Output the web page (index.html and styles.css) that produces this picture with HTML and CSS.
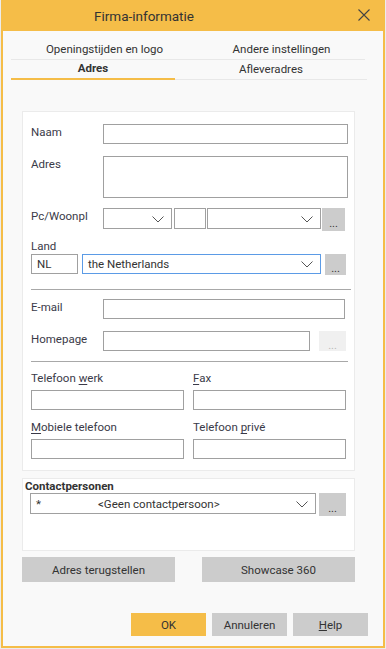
FILE: index.html
```html
<!DOCTYPE html>
<html lang="nl">
<head>
  <meta charset="UTF-8">
  <meta name="viewport" content="width=device-width, initial-scale=1.0">
  <title>Firma-informatie</title>
  <link rel="stylesheet" href="styles.css">
</head>
<body>

  <div class="dialog">
    <div class="titlebar">
      <span class="title">Firma-informatie</span>
      <svg class="close" width="12" height="12" viewBox="0 0 12 12">
        <path d="M0.5 0.5 L11.5 11.5 M11.5 0.5 L0.5 11.5" stroke="#444" stroke-width="1.1" fill="none"/>
      </svg>
    </div>

    <div class="tabs">
      <div class="tab-row top">
        <div class="tab wide">Openingstijden en logo</div>
        <div class="tab">Andere instellingen</div>
      </div>
      <div class="tab-row bottom">
        <div class="tab narrow active">Adres</div>
        <div class="tab">Afleveradres</div>
      </div>
    </div>

    <div class="panel address">
      <div class="row">
        <div class="label">Naam</div>
        <input class="field w-full" type="text">
      </div>

      <div class="row gap-12">
        <div class="label">Adres</div>
        <textarea class="field w-full area"></textarea>
      </div>

      <div class="row gap-10">
        <div class="label">Pc/Woonpl</div>
        <div class="select w-pc"><svg class="chev" width="12" height="7" viewBox="0 0 12 7"><path d="M0.5 0.5 L6 6 L11.5 0.5" stroke="#555" fill="none"/></svg></div>
        <input class="field w-nr" type="text">
        <div class="select w-city"><svg class="chev" width="12" height="7" viewBox="0 0 12 7"><path d="M0.5 0.5 L6 6 L11.5 0.5" stroke="#555" fill="none"/></svg></div>
        <button class="dots pc-dots">...</button>
      </div>

      <div class="label top-label">Land</div>
      <div class="row land">
        <input class="field w-code" type="text" value="NL">
        <div class="select w-country focused">
          <span>the Netherlands</span>
          <svg class="chev" width="12" height="7" viewBox="0 0 12 7"><path d="M0.5 0.5 L6 6 L11.5 0.5" stroke="#555" fill="none"/></svg>
        </div>
        <button class="dots land-dots">...</button>
      </div>

      <div class="separator sep-1"></div>

      <div class="row gap-9">
        <div class="label">E-mail</div>
        <input class="field w-mail" type="text">
      </div>

      <div class="row gap-12">
        <div class="label">Homepage</div>
        <input class="field w-home" type="text">
        <button class="dots disabled">...</button>
      </div>

      <div class="separator sep-2"></div>

      <div class="phones">
        <div class="phone">
          <div class="label">Telefoon <u>w</u>erk</div>
          <input class="field" type="text">
        </div>
        <div class="phone">
          <div class="label"><u>F</u>ax</div>
          <input class="field" type="text">
        </div>
        <div class="phone">
          <div class="label"><u>M</u>obiele telefoon</div>
          <input class="field" type="text">
        </div>
        <div class="phone">
          <div class="label">Telefoon <u>p</u>rivé</div>
          <input class="field" type="text">
        </div>
      </div>
    </div>

    <div class="panel contacts">
      <div class="contacts-title">Contactpersonen</div>
      <div class="row">
        <div class="select w-contact">
          <span class="star">*</span>
          <span class="contact-name">&lt;Geen contactpersoon&gt;</span>
          <svg class="chev" width="12" height="7" viewBox="0 0 12 7"><path d="M0.5 0.5 L6 6 L11.5 0.5" stroke="#555" fill="none"/></svg>
        </div>
        <button class="dots contact-dots">...</button>
      </div>
    </div>

    <div class="actions">
      <button class="gray-button">Adres terugstellen</button>
      <button class="gray-button">Showcase 360</button>
    </div>

    <div class="footer">
      <button class="footer-button ok">OK</button>
      <button class="footer-button">Annuleren</button>
      <button class="footer-button"><u>H</u>elp</button>
    </div>
  </div>

</body>
</html>
```

FILE: styles.css
```css
body {
  margin: 0;
  padding: 0;
  background: #ececec;
  font-family: Roboto, 'Noto Sans', sans-serif;
  font-size: 11.5px;
  color: #333;
}

.dialog {
  box-sizing: border-box;
  width: 384px;
  height: 648px;
  margin-left: 1px;
  background: #f9f9f9;
  border: 2px solid #f5bd48;
  border-top: none;
}

/* Title bar */
.titlebar {
  height: 31px;
  margin: 0 -2px;
  background: #f5bd48;
  display: flex;
  align-items: center;
  position: relative;
}

.title {
  padding-left: 93px;
  font-size: 13.5px;
  color: #333;
}

.close {
  position: absolute;
  left: 357px;
  top: 9px;
}

/* Tabs */
.tabs {
  margin-left: 8px;
}

.tab-row {
  display: flex;
  text-align: center;
}

.tab-row.top {
  margin-top: 9px;
  width: 354px;
  height: 19px;
  border-bottom: 1px solid #e8e8e8;
}

.tab-row.bottom {
  width: 356px;
  height: 19px;
  border-bottom: 1px solid #e8e8e8;
}

.tab {
  flex: 1;
  line-height: 18px;
}

.tab.wide {
  flex: 0 0 187px;
}

.tab.narrow {
  flex: 0 0 164px;
}

.tab.active {
  font-weight: bold;
  border-bottom: 2px solid #f5bd48;
  margin-bottom: -1px;
  line-height: 17px;
}

/* Panels */
.panel {
  box-sizing: border-box;
  width: 333px;
  margin-left: 19px;
  background: #fff;
  border: 1px solid #ebebeb;
}

.panel.address {
  margin-top: 31px;
  height: 360px;
  padding: 12px 0 0 8px;
}

.row {
  display: flex;
  align-items: flex-start;
}

.gap-9 { margin-top: 9px; }
.gap-10 { margin-top: 10px; }
.gap-12 { margin-top: 12px; }

.label {
  width: 72px;
  line-height: 16px;
  color: #3a3a48;
}

.label u {
  text-decoration-thickness: 1px;
  text-underline-offset: 2px;
}

.field {
  box-sizing: border-box;
  height: 20px;
  border: 1px solid #a0a0a0;
  background: #fff;
  margin: 0;
  padding: 0 5px;
  font: inherit;
  color: #333;
  outline: none;
}

textarea.field {
  resize: none;
}

.area { height: 42px; }

.w-full { width: 245px; }
.w-nr { width: 32px; height: 21px; margin: 0 1px 0 2px; }
.w-code { width: 47px; margin-right: 4px; }
.w-mail { width: 242px; }
.w-home { width: 207px; margin-right: 9px; }

.select {
  box-sizing: border-box;
  height: 21px;
  border: 1px solid #a0a0a0;
  background: #fff;
  display: flex;
  align-items: center;
  position: relative;
  padding-left: 5px;
}

.select .chev {
  position: absolute;
  right: 7px;
  top: 7px;
}

.w-pc { width: 69px; }
.w-city { width: 114px; margin-right: 1px; }

.w-country {
  width: 239px;
  height: 20px;
  margin-right: 4px;
  border-color: #5b9be6;
}

.w-country .chev { top: 6px; }

.dots {
  box-sizing: border-box;
  border: none;
  background: #cccccc;
  color: #333;
  font: inherit;
  font-size: 11px;
  line-height: 1;
  padding: 8px 0 0;
  margin: 0;
  height: 23px;
}

.pc-dots { width: 23px; }
.land-dots { width: 21px; height: 21px; }
.contact-dots { width: 27px; margin-left: 3px; }

.dots.disabled {
  width: 27px;
  height: 20px;
  background: #f0f0f0;
  color: #b8b8b8;
}

.top-label {
  margin-top: 8px;
  line-height: 15px;
}

.separator {
  height: 1px;
  background: #a8a8a8;
}

.sep-1 { width: 320px; margin-top: 14px; }
.sep-2 { width: 317px; margin-top: 10px; }

.phones {
  display: grid;
  grid-template-columns: 153px 153px;
  column-gap: 9px;
  row-gap: 9px;
  margin-top: 8px;
}

.phone .label {
  width: auto;
  margin-bottom: 4px;
}

.phone .field {
  width: 153px;
}

/* Contacts */
.panel.contacts {
  margin-top: 7px;
  height: 73px;
  padding: 0 0 0 2px;
}

.contacts-title {
  font-weight: bold;
  line-height: 14px;
  color: #333;
}

.w-contact {
  width: 286px;
  margin-left: 5px;
}

.star {
  width: 62px;
}

.contact-name {
  color: #333;
}

/* Buttons */
.actions {
  display: flex;
  gap: 27px;
  margin: 6px 0 0 19px;
}

.gray-button {
  width: 153px;
  height: 25px;
  border: none;
  background: #cccccc;
  color: #333;
  font: inherit;
}

.footer {
  display: flex;
  justify-content: flex-end;
  gap: 6px;
  margin: 31px 15px 0 0;
}

.footer-button {
  width: 75px;
  height: 23px;
  border: none;
  background: #cccccc;
  color: #333;
  font: inherit;
}

.footer-button.ok {
  background: #f5bd48;
}
```
